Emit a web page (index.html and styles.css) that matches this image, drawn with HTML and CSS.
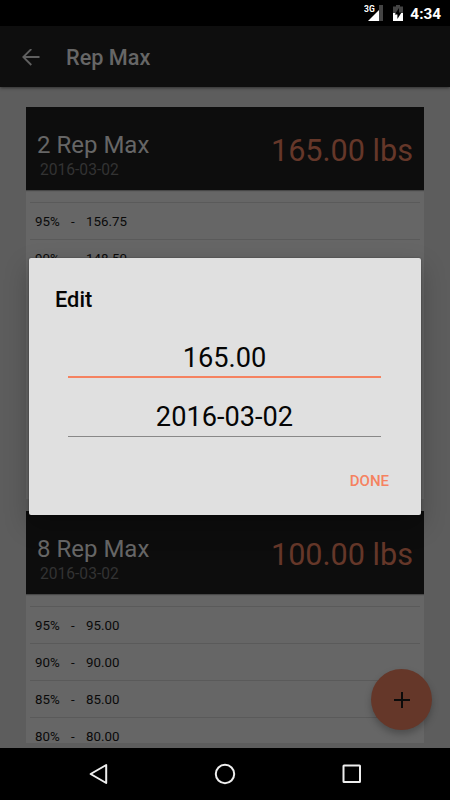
FILE: index.html
```html
<!DOCTYPE html>
<html lang="en">
<head>
<meta charset="utf-8">
<title>Rep Max</title>
<link rel="stylesheet" href="styles.css">
</head>
<body>
<div class="screen">
  <header class="status">
    <svg class="signal" width="20" height="18" viewBox="0 0 20 18">
      <path d="M4 16 19 1V16Z" fill="#fff"/>
      <path d="M15 0H19V16H15Z" fill="#444"/>
      <path d="M0 0H11V8H0Z" fill="#000"/>
      <text class="network" x="0" y="7">3G</text>
    </svg>
    <svg class="battery" width="10" height="16" viewBox="0 0 10 16">
      <path d="M0 1.5H3V0H7V1.5H10V8H0Z" fill="#444"/>
      <path d="M0 8H10V16H0Z" fill="#fff"/>
      <path d="M6 3 1.7 9.5H4.4V14L8.5 7.5H6Z" fill="#000"/>
    </svg>
    <span class="clock">4:34</span>
  </header>
  <nav class="appbar">
    <svg width="18" height="18" viewBox="0 0 18 18" fill="none" stroke="#606060" stroke-width="1.8"><path d="M17.5 8H1.5M9.3 0 1.3 8l8 8"/></svg>
    <h1>Rep Max</h1>
  </nav>
  <main class="list">
    <section class="card card-first">
      <div class="card-head">
        <div><h2>2 Rep Max</h2><p>2016-03-02</p></div>
        <strong>165.00 lbs</strong>
      </div>
      <ul>
        <li><span>95%</span><span>-</span><span>156.75</span></li>
        <li><span>90%</span><span>-</span><span>148.50</span></li>
      </ul>
    </section>
    <section class="card card-second">
      <div class="card-head">
        <div><h2>8 Rep Max</h2><p>2016-03-02</p></div>
        <strong>100.00 lbs</strong>
      </div>
      <ul>
        <li><span>95%</span><span>-</span><span>95.00</span></li>
        <li><span>90%</span><span>-</span><span>90.00</span></li>
        <li><span>85%</span><span>-</span><span>85.00</span></li>
        <li><span>80%</span><span>-</span><span>80.00</span></li>
      </ul>
    </section>
  </main>
  <footer class="navbar">
    <svg width="20" height="22" viewBox="0 0 20 22"><path d="M18.2 2V20L2.6 11Z"/></svg>
    <svg width="22" height="22" viewBox="0 0 22 22"><circle cx="11" cy="11" r="9.2"/></svg>
    <svg width="20" height="20" viewBox="0 0 20 20"><rect x="1.5" y="1.5" width="16.5" height="16.5" rx=".5"/></svg>
  </footer>
  <div class="fab"><svg width="16" height="16" viewBox="0 0 16 16"><path d="M8 0V16M0 8H16" stroke="#0b0b0b" stroke-width="2"/></svg></div>
  <div class="dialog">
    <h3>Edit</h3>
    <div class="field field-active">165.00</div>
    <div class="field">2016-03-02</div>
    <div class="actions">DONE</div>
  </div>
</div>
</body>
</html>
```
FILE: styles.css
```css
* { box-sizing: border-box; margin: 0; padding: 0; }
body { font-family: Roboto, sans-serif; background: #5d5d5d; }
.screen { position: relative; width: 450px; height: 800px; overflow: hidden; display: flex; flex-direction: column; }

.status { height: 26px; flex: none; background: #000; display: flex; justify-content: flex-end; align-items: flex-start; padding: 5px 9px 0 0; }
.signal { margin-right: 9px; }
.battery { margin-right: 7px; }
.network { font-size: 8.5px; font-weight: 700; fill: #fff; }
.clock { color: #fff; font-size: 15.3px; font-weight: 700; line-height: 18px; }

.appbar { height: 61px; flex: none; background: #0e0e0e; display: flex; align-items: center; padding: 2px 0 0 22px; gap: 26px; box-shadow: 0 1px 3px rgba(0,0,0,.5); z-index: 1; }
.appbar h1 { font-size: 21.7px; font-weight: 500; line-height: 26px; color: #666; }

.list { flex: 1; padding: 20px 26px 0; overflow: hidden; display: flex; flex-direction: column; gap: 12px; }
.card { flex: none; width: 398px; background: #666; overflow: hidden; }
.card-first { height: 392px; }
.card-second { height: 232px; }
.card-head { height: 83px; margin-bottom: 12px; background: #0d0d0d; display: flex; justify-content: space-between; padding: 23px 11px 0; box-shadow: 0 1px 1px rgba(0,0,0,.3); }
.card-head h2 { font-size: 24px; font-weight: 400; line-height: 30px; color: #666; }
.card-head p { font-size: 15.6px; line-height: 20px; color: #333; padding-left: 3px; }
.card-head strong { font-size: 30.6px; font-weight: 400; line-height: 42px; color: #653729; }
.card ul { list-style: none; padding: 0 4px; }
.card li { height: 37.1px; border-top: 1px solid #5a5a5a; padding-left: 5px; display: flex; align-items: center; font-size: 13.3px; color: #0a0a0a; }
.card li span:nth-child(1) { width: 36px; }
.card li span:nth-child(2) { width: 15px; }

.navbar { height: 52px; flex: none; background: #000; display: flex; align-items: center; justify-content: center; gap: 106px; }
.navbar svg { fill: none; stroke: #eee; stroke-width: 2; stroke-linejoin: round; }

.fab { position: absolute; left: 371px; top: 669px; width: 61px; height: 61px; border-radius: 50%; background: #653729; display: flex; align-items: center; justify-content: center; box-shadow: 0 4px 7px rgba(0,0,0,.25); }

.dialog { position: absolute; left: 29px; top: 258px; width: 392px; height: 257px; padding: 28px 27px 0 26px; background: #e0e0e0; border-radius: 2px; box-shadow: 0 10px 24px rgba(0,0,0,.25), 0 0 2px rgba(0,0,0,.4); color: #050505; z-index: 2; }
.dialog h3 { font-size: 21.8px; font-weight: 500; line-height: 28px; }
.field { margin: 0 13px; height: 59px; padding-top: 23px; border-bottom: 1px solid #888; text-align: center; font-size: 27.2px; line-height: 32px; }
.field-active { height: 64px; padding-top: 28px; border-bottom: 2px solid #f58260; }
.actions { text-align: right; padding: 34px 5px 0 0; color: #f58260; font-size: 15px; font-weight: 500; line-height: 20px; }
```
